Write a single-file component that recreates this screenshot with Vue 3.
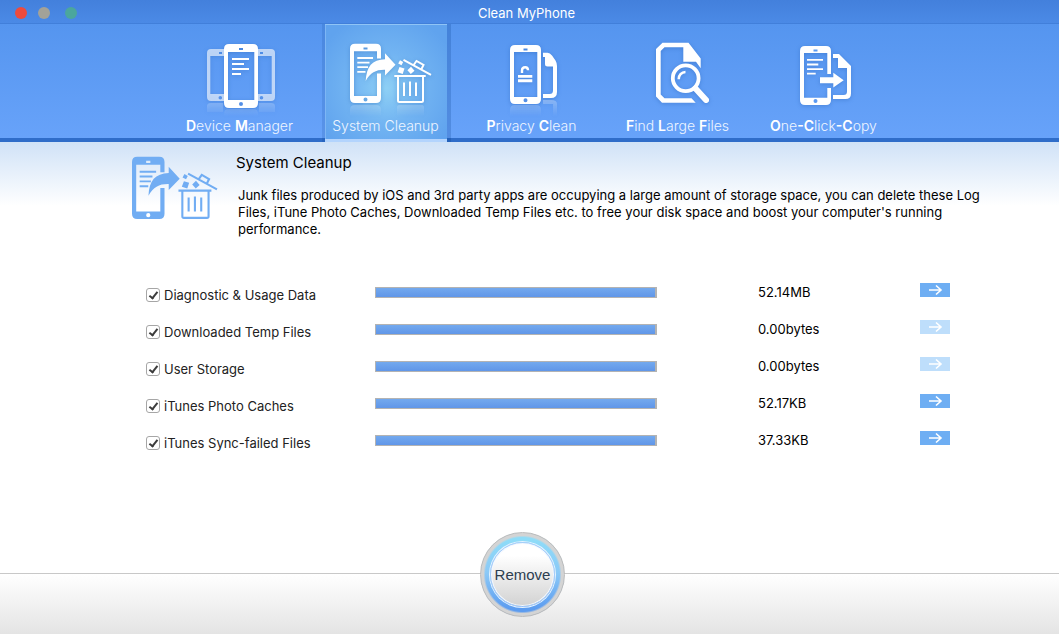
<script setup>
import { reactive } from 'vue'

const tabs = [
  { id: 'device', parts: [['D', 'evice '], ['M', 'anager']], view: '190 38 100 78' },
  { id: 'cleanup', parts: [['', 'System Cleanup']], view: '336 38 100 78' },
  { id: 'privacy', parts: [['P', 'rivacy '], ['C', 'lean']], view: '482 38 100 78' },
  { id: 'large', parts: [['F', 'ind '], ['L', 'arge '], ['F', 'iles']], view: '628 38 100 78' },
  { id: 'copy', parts: [['O', 'ne'], ['-C', 'lick'], ['-C', 'opy']], view: '774 38 100 78' },
]

const items = reactive([
  { name: 'Diagnostic & Usage Data', size: '52.14MB', percent: 100, checked: true, enabled: true },
  { name: 'Downloaded Temp Files', size: '0.00bytes', percent: 100, checked: true, enabled: false },
  { name: 'User Storage', size: '0.00bytes', percent: 100, checked: true, enabled: false },
  { name: 'iTunes Photo Caches', size: '52.17KB', percent: 100, checked: true, enabled: true },
  { name: 'iTunes Sync-failed Files', size: '37.33KB', percent: 100, checked: true, enabled: true },
])
</script>

<template>
  <div class="window">
    <svg class="defs" width="0" height="0" aria-hidden="true">
      <defs>
        <linearGradient id="fade" gradientUnits="userSpaceOnUse" x1="0" y1="99" x2="0" y2="116">
          <stop offset="0" stop-color="#fff" stop-opacity="0.3" />
          <stop offset="1" stop-color="#fff" stop-opacity="0" />
        </linearGradient>
        <path id="swoosh" d="M365.7 81C366.5 66.5 372 59.8 385 59.3V53.3L395.5 64.7L385 75.5V69.8C376 69.6 370.5 72.5 365.7 81Z" />
        <mask id="swoosh-gap" maskUnits="userSpaceOnUse" x="340" y="38" width="100" height="80">
          <rect x="340" y="38" width="100" height="80" fill="#fff" />
          <path d="M374 58.5H386V73.5H374Z" fill="#000" />
        </mask>
        <g id="cleanup-icon">
          <g mask="url(#swoosh-gap)">
            <path fill-rule="evenodd" d="M355 43.7H376Q381 43.7 381 48.7V98Q381 103 376 103H355Q350 103 350 98V48.7Q350 43.7 355 43.7ZM354 51.3V96H377V51.3ZM363.5 47.6V49.6H367.5V47.6ZM365.5 97.4A2 2 0 1 0 365.5 101.4A2 2 0 1 0 365.5 97.4Z" />
          </g>
          <path d="M357.3 57.1H373V58.9H357.3ZM357.3 61.7H369.5V63.5H357.3ZM357.3 66.3H368V68.1H357.3ZM357.3 70.9H365.5V72.7H357.3Z" />
          <use href="#swoosh" />
          <path d="M394.3 75H425.7V77H424V100.5Q424 103 421.5 103H399.5Q397 103 397 100.5V77H394.3ZM399 77V101H422V77Z" fill-rule="evenodd" />
          <path d="M403 82.5H405V96H403ZM409 81.5H411V96H409ZM415 82.5H417V96H415Z" />
          <path d="M403.5 59.8L431 74.8M414 64.5L416.5 61L423.5 65L421.5 69" fill="none" stroke="currentColor" stroke-width="2" />
          <path d="M400 60.2L403.2 62L401.5 65.2L398.2 63.4ZM399.5 67L404.5 68.6L402.7 74L397.5 72.3ZM411 66.7L414.5 70.7L410.8 74L407.4 70.2Z" />
        </g>
      </defs>
    </svg>

    <header class="titlebar">
      <div class="lights">
        <button class="light red" aria-label="Close"></button>
        <button class="light gray" aria-label="Minimize"></button>
        <button class="light green" aria-label="Zoom"></button>
      </div>
      <h1 class="app-name">Clean MyPhone</h1>
    </header>

    <nav class="toolbar">
      <button v-for="tab in tabs" :key="tab.id" class="tab" :class="{ active: tab.id === 'cleanup' }">
        <svg class="tab-icon" :viewBox="tab.view" fill="currentColor" aria-hidden="true">
          <template v-if="tab.id === 'device'">
            <g opacity="0.62">
              <path fill-rule="evenodd" d="M211 49H224V101H211Q207 101 207 97V53Q207 49 211 49ZM210.3 56V94H224V56ZM219 52V54H222V52ZM220.3 96A1.8 1.8 0 1 0 220.3 99.6A1.8 1.8 0 1 0 220.3 96Z" />
              <path fill-rule="evenodd" d="M258 49H271Q275 49 275 53V97Q275 101 271 101H258ZM258 56V94H271.7V56ZM260 52V54H263V52ZM261.5 96A1.8 1.8 0 1 0 261.5 99.6A1.8 1.8 0 1 0 261.5 96Z" />
            </g>
            <path fill-rule="evenodd" d="M229 44H253Q258 44 258 49V103Q258 108 253 108H229Q224 108 224 103V49Q224 44 229 44ZM228 52V100H254.3V52ZM239 48V50H243V48ZM241 102A2 2 0 1 0 241 106A2 2 0 1 0 241 102Z" />
            <path d="M232 58H249V60H232ZM232 63H244V65H232ZM232 68H249V70H232ZM232 73H241V75H232Z" />
            <path fill="url(#fade)" d="M224 116V114Q224 109 229 109H253Q258 109 258 114V116ZM207 112V106Q207 103 211 103H223V112ZM259 112V103H271Q275 103 275 106V112Z" />
          </template>
          <template v-else-if="tab.id === 'cleanup'">
            <use href="#cleanup-icon" />
            <path fill="url(#fade)" d="M350 116V110Q350 105 355 105H376Q381 105 381 110V116ZM397 116V107Q397 105 399 105H422Q424 105 424 107V116Z" />
          </template>
          <template v-else-if="tab.id === 'privacy'">
            <path fill-rule="evenodd" d="M515 45H536Q541 45 541 50V99Q541 104 536 104H515Q510 104 510 99V50Q510 45 515 45ZM514 52V97H537.3V52ZM523.5 48.4V50.4H527.5V48.4ZM525.5 98.2A2 2 0 1 0 525.5 102.2A2 2 0 1 0 525.5 98.2Z" />
            <path d="M518 75H532.3V77.7H518ZM518 79.3H532.3V82.3H518Z" />
            <path d="M522 73V70.5Q522 67.2 525.2 67.2Q528 67.2 528 70.3" fill="none" stroke="currentColor" stroke-width="2.4" />
            <path d="M543 52.7H547.5Q550 52.7 552 55.5L555.5 60.5Q557 63 557 66V92Q557 98 551 98H543V94H549.5Q553 94 553 90.5V66.5H547.5Q545 66.5 545 64V57H543Z" />
            <path fill="url(#fade)" d="M510 116V110Q510 105 515 105H536Q541 105 541 110V116ZM543 104V100H551Q557 100 557 104V116H553V104Z" />
          </template>
          <template v-else-if="tab.id === 'large'">
            <path d="M662.5 42.7H688.5L700.7 58.5V68.3L696 61.7H683.3V47.3H664.5L660.7 51V94.5L664.5 98.3H691.5L695.7 102.7H662L656 96.5V49Z" />
            <circle cx="685.7" cy="78.3" r="12.9" fill="none" stroke="currentColor" stroke-width="3.8" />
            <path d="M695.5 88.5L706 100" fill="none" stroke="currentColor" stroke-width="6" stroke-linecap="round" />
            <path d="M678.7 79.3A7 7 0 0 1 685.5 72" fill="none" stroke="currentColor" stroke-width="2.6" />
          </template>
          <template v-else>
            <path d="M831 74H827.3V53H804V97.7H827.3V88H831V100Q831 105 826 105H805Q800 105 800 100V51Q800 46 805 46H826Q831 46 831 51Z" />
            <path class="hole" d="M813.5 49.5H817.5V51.5H813.5ZM815.5 99A2 2 0 1 0 815.5 103A2 2 0 1 0 815.5 99Z" />
            <path d="M807 59H823V60.8H807ZM807 63.6H818.3V65.4H807ZM807 68.2H823V70H807ZM807 72.8H815.7V74.6H807Z" />
            <path d="M820 77.3H833.3V72.7L843.7 80.3L833.3 87.5V83.3H820Z" />
            <path d="M833 54H839L851 66V93.5Q851 99 845.5 99H833V95H843.5Q847 95 847 91.5V68H838V58H833Z" />
          </template>
        </svg>
        <span class="tab-label"><template v-for="(part, i) in tab.parts" :key="i"><b>{{ part[0] }}</b>{{ part[1] }}</template></span>
      </button>
    </nav>

    <main class="content">
      <section class="intro">
        <svg class="intro-icon" viewBox="350 43 82 61" fill="currentColor" aria-hidden="true">
          <use href="#cleanup-icon" />
        </svg>
        <div class="intro-text">
          <h2>System Cleanup</h2>
          <p>Junk files produced by iOS and 3rd party apps are occupying a large amount of storage space, you can delete these Log Files, iTune Photo Caches, Downloaded Temp Files etc. to free your disk space and boost your computer's running performance.</p>
        </div>
      </section>

      <ul class="items">
        <li v-for="item in items" :key="item.name" class="item">
          <label class="item-name">
            <input v-model="item.checked" type="checkbox" />
            <span>{{ item.name }}</span>
          </label>
          <div class="bar" role="progressbar" :aria-label="item.name" :aria-valuenow="item.percent">
            <div class="bar-fill" :style="{ width: item.percent + '%' }"></div>
          </div>
          <span class="size">{{ item.size }}</span>
          <button class="go" :disabled="!item.enabled" :aria-label="'Show ' + item.name">
            <svg viewBox="0 0 30 14" width="30" height="14" aria-hidden="true">
              <path d="M9 7H21M16 2.5L21 7L16 11.5" fill="none" stroke="#fff" stroke-width="1.6" />
            </svg>
          </button>
        </li>
      </ul>
    </main>

    <footer class="footer">
      <button class="remove"><span>Remove</span></button>
    </footer>
  </div>
</template>

<style>
body {
  margin: 0;
}
</style>

<style scoped>
.window {
  display: flex;
  flex-direction: column;
  min-height: 100vh;
  background: #fff;
  color: #000;
  font: 13px/17px Inter, "Liberation Sans", sans-serif;
}
.defs {
  position: absolute;
}
button {
  margin: 0;
  padding: 0;
  border: 0;
  background: none;
  font: inherit;
  color: inherit;
}
.titlebar {
  display: grid;
  grid-template-columns: 1fr auto 1fr;
  align-items: center;
  box-sizing: border-box;
  height: 24px;
  padding: 3px 15px 0;
  border-bottom: 1px solid #417fda;
  background: linear-gradient(#4380dc, #4b8ae6);
}
.lights {
  display: grid;
  grid-template-columns: 23px 27px 12px;
}
.light {
  width: 12px;
  height: 12px;
  border-radius: 50%;
}
.red {
  background: #ee4b3c;
}
.gray {
  background: #a3a298;
}
.green {
  background: #4ba69d;
}
.app-name {
  margin: 0 6px 0 0;
  font-size: 13px;
  font-weight: 400;
  color: #fff;
}
.toolbar {
  display: grid;
  grid-template-columns: repeat(5, 122px);
  justify-content: center;
  gap: 24px;
  box-sizing: border-box;
  height: 118px;
  padding-left: 4px;
  background: linear-gradient(#5595ef, #68a3fa);
  box-shadow: inset 0 -4px #2f6dc9;
}
.tab {
  display: flex;
  flex-direction: column;
  align-items: center;
  box-sizing: border-box;
  padding-top: 14px;
  color: #fff;
}
.active {
  border-bottom: 3px solid #b3d4fd;
  background: radial-gradient(circle at 50% 56%, #8ed0f5 0, #72b4f2 40%, #60a3ee 85%);
  box-shadow: inset 0 1px #8fc4f6, inset 1px 0 #7db6f5, -3px 0 #00388022, 4px 0 #00388033;
}
.tab-icon {
  flex: none;
  width: 100px;
  height: 78px;
  filter: drop-shadow(0 1px 2px #1c55a655);
}
.hole {
  color: #5b9af2;
  fill: #5b9af2;
}
.tab-label {
  font-size: 14px;
  font-weight: 300;
  line-height: 20px;
  white-space: pre;
  color: #eef5ff;
}
.tab-label b {
  font-weight: 600;
  color: #fff;
}
.content {
  flex: 1;
  padding: 11px 0 0;
  background: linear-gradient(#d0e2f7, #fff 64px);
}
.intro {
  display: flex;
  gap: 18px;
  padding: 0 72px 0 132px;
}
.intro-icon {
  flex: none;
  width: 86px;
  height: 64px;
  margin-top: 3px;
  color: #71adf3;
}
h2 {
  margin: 0;
  font-size: 15px;
  font-weight: 400;
  line-height: 20px;
}
.intro-text p {
  margin: 14px 0 0 2px;
}
.items {
  display: flex;
  flex-direction: column;
  gap: 17px;
  margin: 0;
  padding: 44px 109px 0 146px;
  list-style: none;
}
.item {
  display: grid;
  grid-template-columns: 229fr 282fr 101fr 162fr 30px;
  align-items: start;
  height: 20px;
}
.item-name {
  display: flex;
  align-items: flex-start;
  gap: 4px;
  padding-top: 5px;
  color: #222;
}
.item-name input {
  appearance: none;
  display: grid;
  place-items: center;
  box-sizing: border-box;
  width: 14px;
  height: 14px;
  margin: 1px 0 0;
  border: 1px solid #a6a6a6;
  border-radius: 3px;
  background: #fff;
}
.item-name input:checked::before {
  content: "";
  width: 3px;
  height: 7px;
  margin-bottom: 2px;
  border: solid #3c3c3c;
  border-width: 0 2px 2px 0;
  transform: rotate(38deg);
}
.bar {
  box-sizing: border-box;
  height: 11px;
  margin-top: 5px;
  border: 1px solid #b3b3b3;
  border-right-width: 2px;
  background: #e6e6e6;
}
.bar-fill {
  height: 100%;
  background: linear-gradient(#73a9ee, #6096e8);
}
.size {
  grid-column: 4;
  padding-top: 2px;
}
.go {
  display: block;
  width: 30px;
  height: 14px;
  margin-top: 1px;
  background: #6eaef3;
}
.go:disabled {
  background: #bedefb;
}
.go svg {
  display: block;
}
.footer {
  display: flex;
  justify-content: center;
  box-sizing: border-box;
  height: 61px;
  padding-right: 14px;
  border-top: 1px solid #c8c8c8;
  background: linear-gradient(#fff, #e4e4e4);
}
.remove {
  display: grid;
  box-sizing: border-box;
  width: 85px;
  height: 85px;
  margin-top: -42px;
  padding: 9px;
  border: 1px solid #bcbcbc;
  border-radius: 50%;
  background:
    radial-gradient(circle, #fff0 0 37px, #d4d4d4 39px),
    linear-gradient(#8edcf8 6px, #8bc9f7 40px, #5c9cf0 76px);
  font: 14px/20px "Liberation Sans", Arial, sans-serif;
  font-size: 15px;
  color: #2d3e50;
}
.remove span {
  display: grid;
  place-items: center;
  border: 1px solid #a9cdfa;
  border-radius: 50%;
  background: linear-gradient(#fff 20%, #d2d2d2);
  box-shadow: inset 0 0 0 1px #f4f9ff, 0 0 0 1px #e5f3ff;
}
</style>
